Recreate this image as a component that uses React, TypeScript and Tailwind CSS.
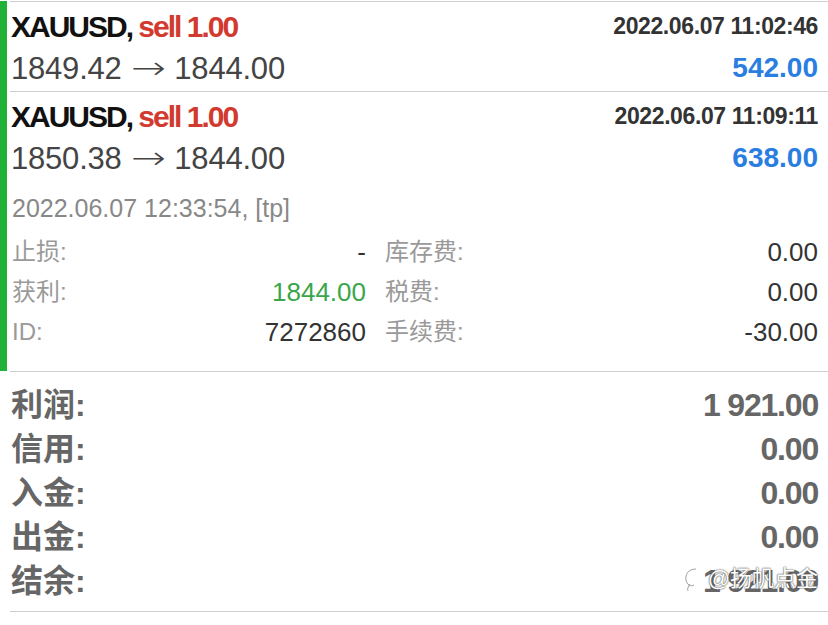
import React from 'react';

const latin = "font-['Liberation_Sans','Noto_Sans_CJK_SC',sans-serif]";

type Trade = {
  symbol: string;
  side: string;
  openTime: string;
  from: string;
  to: string;
  profit: string;
};

const trades: Trade[] = [
  { symbol: 'XAUUSD,', side: 'sell 1.00', openTime: '2022.06.07 11:02:46', from: '1849.42', to: '1844.00', profit: '542.00' },
  { symbol: 'XAUUSD,', side: 'sell 1.00', openTime: '2022.06.07 11:09:11', from: '1850.38', to: '1844.00', profit: '638.00' },
];

const summary = [
  { label: '利润:', value: '1 921.00' },
  { label: '信用:', value: '0.00' },
  { label: '入金:', value: '0.00' },
  { label: '出金:', value: '0.00' },
  { label: '结余:', value: '1 921.00' },
];

function TradeHead({ t }: { t: Trade }) {
  return (
    <>
      <div className="h-[46px] flex items-center justify-between pl-[1px] pt-[2px]">
        <span className="text-[30px] font-bold tracking-[-2px] text-[#111]">
          {t.symbol} <span className="text-[#d23a2f]">{t.side}</span>
        </span>
        <span className="text-[23px] font-bold tracking-[-0.4px] text-[#333]">{t.openTime}</span>
      </div>
      <div className="h-[40px] flex items-center justify-between pl-[1px]">
        <span className="text-[31px] text-[#444] tracking-[-0.2px]">
          {t.from}
          <span className="inline-block mx-[13px] font-['DejaVu_Sans',sans-serif] font-light text-[32px] scale-x-[1.3]">→</span>
          {t.to}
        </span>
        <span className="text-[28px] font-bold text-[#2a7de1]">{t.profit}</span>
      </div>
    </>
  );
}

function Detail({ label, value, valueClass = 'text-[#333]' }: { label: string; value: string; valueClass?: string }) {
  return (
    <div className="h-[40px] flex items-center justify-between">
      <span className="text-[24px] text-[#9a9a9a]">{label}</span>
      <span className={`text-[26px] ${valueClass}`}>{value}</span>
    </div>
  );
}

export default function App() {
  return (
    <div className={`w-[828px] h-[625px] bg-white overflow-hidden ${latin}`}>
      {/* open trades with green marker */}
      <div className="flex pt-[1px]">
        <div className="w-[7px] bg-[#1fb236] shrink-0" />
        <div className="flex-1 ml-[3px]">
          <div className="border-t border-[#cfcfcf] pr-[10px] pb-[3px]">
            <TradeHead t={trades[0]} />
          </div>
          <div className="border-t border-[#cfcfcf] pr-[10px]">
            <TradeHead t={trades[1]} />
            <div className="pt-[18px] pb-[12px] h-[54px] pl-[2px]">
              <span className="block leading-[24px] text-[25px] text-[#888]">2022.06.07 12:33:54, [tp]</span>
            </div>
            <div className="grid grid-cols-[354px_1fr] gap-x-[19px] pl-[2px] pb-[19px]">
              <div>
                <Detail label="止损:" value="-" />
                <Detail label="获利:" value="1844.00" valueClass="text-[#3aa64a]" />
                <Detail label="ID:" value="7272860" />
              </div>
              <div>
                <Detail label="库存费:" value="0.00" />
                <Detail label="税费:" value="0.00" />
                <Detail label="手续费:" value="-30.00" />
              </div>
            </div>
          </div>
        </div>
      </div>

      {/* account summary */}
      <div className="relative ml-[10px] border-t border-b border-[#cfcfcf] pt-[11px] pb-[8px] pr-[10px]">
        {summary.map(s => (
          <div key={s.label} className="h-[44px] flex items-center justify-between pl-[1px]">
            <span className="text-[32px] font-bold text-[#666]">{s.label}</span>
            <span className="text-[32px] font-bold tracking-[-1.2px] text-[#666]">{s.value}</span>
          </div>
        ))}
        <div className="absolute right-[10px] bottom-[16px] flex items-center gap-[2px] text-white text-[22px] [text-shadow:0_0_2px_#555,0_0_1px_#555]">
          <svg width="22" height="26" viewBox="0 0 22 26" className="mr-[2px]">
            <path d="M14 3 C6 3 3 9 4 14 C5 19 9 21 12 19 M8 18 C6 21 5 23 6 25" fill="none" stroke="#fff" strokeWidth="2.2" />
            <path d="M14 3 C6 3 3 9 4 14 C5 19 9 21 12 19 M8 18 C6 21 5 23 6 25" fill="none" stroke="#888" strokeWidth="0.8" />
          </svg>
          <span>@扬帆点金</span>
        </div>
      </div>
    </div>
  );
}
